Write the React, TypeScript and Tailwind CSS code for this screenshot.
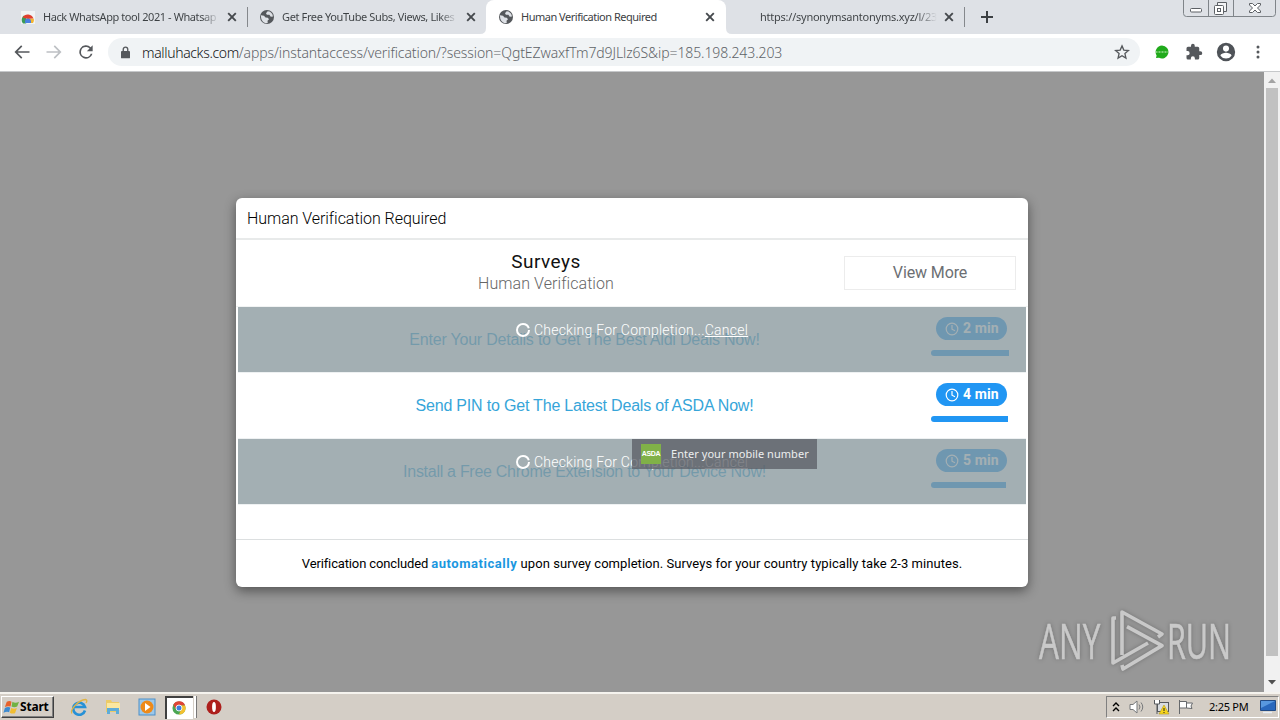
import type { ReactNode } from "react";

function Globe() {
  return (
    <svg viewBox="0 0 24 24" className="h-4 w-4 shrink-0">
      <circle cx="12" cy="12" r="10.5" fill="#55585c" />
      <path d="M3 9.5 7.5 10l2.3 2.6 3.4.4 1.8 2.5-2.2 2.2.3 3.2-3 .6C5.5 20 2.600 16 3 9.500ZM13 3.500l-2.500 2.700 1.300 2.600 3.800-.2 2 2.900 3.400-.3C20.500 6.500 17 3.500 13 3.500Z" fill="#dee1e6" />
    </svg>
  );
}

function Close() {
  return (
    <svg viewBox="0 0 10 10" className="h-[10px] w-[10px] shrink-0">
      <path d="M1.200 1.200 8.800 8.800M8.800 1.200 1.200 8.800" stroke="#45494d" strokeWidth="1.900" />
    </svg>
  );
}

function StoreIcon() {
  return (
    <svg viewBox="0 0 16 16" className="h-4 w-4 shrink-0">
      <path d="M1 2h14v13H1z" fill="#f1f3f4" />
      <path d="M2 13a6 6 0 0 1 2-6.500l4 5.500-2 2.500H3z" fill="#3c9b56" />
      <path d="M2.600 8.500A6 6 0 0 1 13.500 9.500L8 10z" fill="#e0402f" />
      <path d="M8.500 9.800h5.400A6 6 0 0 1 13 14H8z" fill="#f3b632" />
      <path d="M5 12.500a3 3 0 0 1 6 0V14H5z" fill="#4b7fe0" />
    </svg>
  );
}

function TabStrip() {
  return (
    <div className="flex h-[34px] bg-[#dee1e6] text-[11px] text-[#3c4043]">
      <div className="flex w-[247px] items-center pl-5">
        <StoreIcon />
        <div className="ml-[7px] w-[176px] overflow-hidden whitespace-nowrap bg-gradient-to-r from-[#3c4043] from-90% to-[#dee1e6] bg-clip-text tracking-[-0.420px] text-transparent">
          Hack WhatsApp tool 2021 - Whatsap
        </div>
        <div className="ml-2"><Close /></div>
      </div>
      <div className="my-[7px] w-px bg-[#85888c]" />
      <div className="flex w-[238px] items-center pl-[11px]">
        <Globe />
        <div className="ml-[7px] w-[175px] overflow-hidden whitespace-nowrap bg-gradient-to-r from-[#3c4043] from-90% to-[#dee1e6] bg-clip-text tracking-[-0.370px] text-transparent">
          Get Free YouTube Subs, Views, Likes
        </div>
        <div className="ml-[9px]"><Close /></div>
      </div>
      <div className="relative flex w-[240px] items-center rounded-t-lg bg-white pl-3">
        <Globe />
        <div className="ml-[7px] w-[174px] whitespace-nowrap tracking-[-0.490px]">Human Verification Required</div>
        <div className="ml-[10px]"><Close /></div>
        <svg viewBox="0 0 6 6" className="absolute -left-[6px] bottom-0 h-[6px] w-[6px]"><path d="M6 0v6H0q6 0 6-6" fill="#fff" /></svg>
        <svg viewBox="0 0 6 6" className="absolute -right-[6px] bottom-0 h-[6px] w-[6px]"><path d="M0 0v6h6Q0 6 0 0" fill="#fff" /></svg>
      </div>
      <div className="flex w-[238px] items-center pl-[34px]">
        <div className="w-[177px] overflow-hidden whitespace-nowrap bg-gradient-to-r from-[#3c4043] from-88% to-[#dee1e6] bg-clip-text tracking-[-0.240px] text-transparent">
          https://synonymsantonyms.xyz/l/23
        </div>
        <div className="ml-[7px]"><Close /></div>
      </div>
      <div className="my-[7px] w-px bg-[#85888c]" />
      <div className="flex flex-1 items-center pl-4">
        <svg viewBox="0 0 12 12" className="h-3 w-3">
          <path d="M6 0v12M0 6h12" stroke="#3c4043" strokeWidth="2" />
        </svg>
      </div>
      <svg viewBox="0 0 94 17" className="mr-[3px] h-[17px] w-[94px]" fill="none" stroke="#7f8489">
        <path d="M.5 0v13.500a3 3 0 0 0 3 3h86a3 3 0 0 0 3-3V0M25.500 0v16M50.500 0v16" />
        <g stroke="#5c6065">
          <rect x="7.500" y="8.500" width="11" height="3.500" rx="1" fill="#fff" />
          <path d="M34.500 5.500V2.500h9v9h-3" fill="#f3f4f6" />
          <rect x="31.500" y="5.500" width="9" height="9" rx="1" fill="#fff" />
          <rect x="34.500" y="8.500" width="3" height="3" />
          <path d="M66.500 3.500h3l2.500 2.500 2.500-2.500h3v1.500l-3 3 3 3v1.500h-3L72 10l-2.500 2.500h-3V11l3-3-3-3z" fill="#fff" />
        </g>
      </svg>
    </div>
  );
}

function Toolbar() {
  return (
    <div className="flex h-[38px] items-center border-b border-[#c6c8ca] bg-white pb-px">
      <svg viewBox="0 0 24 24" className="ml-3 h-5 w-5" fill="#55585c">
        <path d="M21 11H6.800l5.600-5.600L11 4l-8 8 8 8 1.400-1.400L6.800 13H21z" />
      </svg>
      <svg viewBox="0 0 24 24" className="ml-3 h-5 w-5" fill="#bdc0c4">
        <path d="M3 11h14.200l-5.600-5.600L13 4l8 8-8 8-1.400-1.400 5.600-5.600H3z" />
      </svg>
      <svg viewBox="0 0 24 24" className="ml-3 h-5 w-5" fill="#55585c">
        <path d="M17.650 6.350A8 8 0 1 0 19.730 14h-2.080A6 6 0 1 1 12 6c1.660 0 3.140.69 4.220 1.780L13 11h7V4z" />
      </svg>
      <div className="ml-3 flex h-7 w-[1032px] items-center rounded-full bg-[#f0f3f5]">
        <svg viewBox="0 0 10 14" className="ml-[13px] h-[13px] w-[9px]">
          <path d="M2.500 6V3.500a2.500 2.500 0 0 1 5 0V6" fill="none" stroke="#55585c" strokeWidth="1.500" />
          <rect y="5.300" width="10" height="8.200" rx="1" fill="#55585c" />
        </svg>
        <div className="ml-3 w-[700px] whitespace-nowrap text-[14px] font-light tracking-[-0.090px] text-[#5f6368]">
          <span className="tracking-[-0.350px] text-[#101214]">malluhacks.com</span>/apps/instantaccess/verification/?session=QgtEZwaxfTm7d9JLlz6S&amp;ip=185.198.243.203
        </div>
        <svg viewBox="0 0 24 24" className="ml-auto mr-[10px] h-4 w-4" fill="none" stroke="#55585c" strokeWidth="2">
          <path d="m12 2.800 2.700 6.400 6.900.6-5.200 4.500 1.500 6.800-5.900-3.600-5.900 3.600 1.500-6.800-5.200-4.500 6.900-.6z" />
        </svg>
      </div>
      <svg viewBox="0 0 14 14" className="ml-[15px] h-[14px] w-[14px]">
        <path d="M7 .5a6.500 6.500 0 1 1-3 12.300L1 13l.6-2.600A6.500 6.500 0 0 1 7 .5z" fill="#20aa1b" />
        <path d="M1 7h12" stroke="#98dc91" strokeWidth="1.500" strokeDasharray="1 .5" />
      </svg>
      <svg viewBox="0 0 24 24" className="ml-4 h-[18px] w-[18px]" fill="#55585c">
        <path d="M20.500 11H19V7a2 2 0 0 0-2-2h-4V3.500a2.500 2.500 0 0 0-5 0V5H4a2 2 0 0 0-2 2v3.800h1.500a2.700 2.700 0 0 1 0 5.400H2V20a2 2 0 0 0 2 2h3.800v-1.500a2.700 2.700 0 0 1 5.400 0V22H17a2 2 0 0 0 2-2v-4h1.500a2.500 2.500 0 0 0 0-5z" />
      </svg>
      <svg viewBox="0 0 24 24" className="ml-[12px] h-[22px] w-[22px]" fill="#4f5358">
        <path fillRule="evenodd" d="M12 2a10 10 0 1 0 0 20 10 10 0 0 0 0-20zm0 3a3.300 3.300 0 1 1 0 6.600A3.300 3.300 0 0 1 12 5zm0 14.200a7.200 7.200 0 0 1-6-3.200c0-2 4-3.100 6-3.100s6 1.100 6 3.100a7.200 7.200 0 0 1-6 3.200z" />
      </svg>
      <svg viewBox="0 0 4 14" className="ml-[19px] h-[14px] w-[4px]" fill="#55585c">
        <circle cx="2" cy="2" r="1.500" /><circle cx="2" cy="7" r="1.500" /><circle cx="2" cy="12" r="1.500" />
      </svg>
    </div>
  );
}

type SurveyProps = { title: ReactNode; mins: number; bar: string; tracking: string; pending?: boolean };

function Survey({ title, mins, bar, tracking, pending }: SurveyProps) {
  return (
    <div className="relative mx-[2px] flex h-[66px] border-b border-[#eef1f2] font-['Liberation_Sans',sans-serif]">
      <div className={`flex w-[693px] items-center justify-center whitespace-nowrap text-[16px] text-[#36a5d9] ${tracking}`}>
        {title}
      </div>
      <div className="flex flex-col pt-[10px] font-[Roboto,sans-serif]">
        <div className="ml-[5px] flex h-[23px] w-[71px] items-center rounded-full bg-[#2196f3] pl-[9px] text-[14px] font-bold text-white">
          <svg viewBox="0 0 14 14" className="mr-1 h-[14px] w-[14px]" fill="none" stroke="#fff" strokeWidth="1.200">
            <circle cx="7" cy="7" r="5.800" /><path d="M7 3v4.200l3 1.500" />
          </svg>
          <span className="tracking-[0.100px]">{mins} min</span>
        </div>
        <div className={`mt-[10px] h-[6px] rounded-l-full rounded-r-[2px] bg-[#2196f3] ${bar}`} />
      </div>
      {pending && (
        <div className="absolute inset-x-0 top-0 flex h-[65px] justify-center bg-[#87979c]/77 pt-[13px] font-[Roboto,sans-serif] text-[14px] font-light leading-5 tracking-[0.240px] text-white">
          <svg viewBox="0 0 14 14" className="mr-1 mt-[3px] h-[14px] w-[14px]" fill="none">
            <circle cx="7" cy="7" r="6" stroke="#fff" strokeWidth="2" strokeDasharray="35 3" />
          </svg>
          Checking For Completion...<span className="underline">Cancel</span>
        </div>
      )}
    </div>
  );
}

function Dialog() {
  return (
    <div className="ml-[236px] mt-[126px] flex h-[389px] w-[792px] flex-col rounded-[6px] bg-white font-[Roboto,sans-serif] shadow-[0_4px_12px_rgba(0,0,0,0.45)]">
      <div className="flex h-[42px] items-center border-b-2 border-[#e8eaea] pl-[11px] pt-px text-[16px] font-light tracking-[-0.050px] text-black">
        Human Verification Required
      </div>
      <div className="flex h-[67px] border-b border-[#f1f3f3]">
        <div className="w-[608px] pl-3 pt-[11px] text-center">
          <div className="text-[19px] leading-[22px] tracking-[0.450px] text-[#111]">Surveys</div>
          <div className="text-[16px] font-light leading-[22px] tracking-[0.070px] text-[#666]">Human Verification</div>
        </div>
        <div className="mt-[16px] flex h-[34px] w-[172px] items-center justify-center border border-[#ececec] text-[16px] tracking-[-0.120px] text-[#6c6f73]">
          View More
        </div>
      </div>
      <Survey title="Enter Your Details to Get The Best Aldi Deals Now!" mins={2} bar="w-[78px]" tracking="tracking-[-0.210px]" pending />
      <Survey title="Send PIN to Get The Latest Deals of ASDA Now!" mins={4} bar="w-[77px]" tracking="tracking-[-0.190px]" />
      <div className="relative">
        <Survey title="Install a Free Chrome Extension to Your Device Now!" mins={5} bar="w-[75px]" tracking="tracking-[-0.280px]" pending />
        <div className="absolute left-[396px] top-0 flex h-[30px] w-[185px] items-center bg-[#5a5c64]/75 font-['Noto_Sans',sans-serif] text-[11px] text-[#eceeef]">
          <div className="ml-[9px] flex h-[20px] w-[20px] items-center justify-center bg-[#80b148] font-['Liberation_Sans',sans-serif] text-[7px] font-bold tracking-tighter text-white">
            ASDA
          </div>
          <span className="ml-[10px] whitespace-nowrap tracking-[0.040px]">Enter your mobile number</span>
        </div>
      </div>
      <div className="h-[35px] border-b border-[#dcdfe0]" />
      <div className="flex flex-1 items-center justify-center whitespace-pre text-[13px] tracking-[0.050px] text-black">
        <span className="tracking-[-0.140px]">Verification concluded </span><b className="tracking-[0.550px] text-[#1b97e0]">automatically</b> upon survey completion. Surveys for your country typically take 2-3 minutes.
      </div>
    </div>
  );
}

function Watermark() {
  return (
    <div className="absolute left-[1039px] top-[608px] flex h-[64px] w-[196px] items-center font-['Open_Sans',sans-serif] text-[50px] leading-none text-[#c9c9c9] drop-shadow-[0_0_2px_rgba(0,0,0,0.25)]">
      <div className="w-[71px] [-webkit-text-stroke:0.6px_#c9c9c9]"><span className="inline-block origin-left scale-x-[0.63]">ANY</span></div>
      <svg viewBox="0 0 56 62" className="h-[62px] w-[56px] shrink-0" fill="none" stroke="#c9c9c9" strokeWidth="3.600" strokeLinejoin="round">
        <path d="M6 9H3v45l35-20M12 46V3l40 22-4 3M17 17.600l35 19L13 60l-1-4" />
      </svg>
      <div className="ml-px w-[66px] [-webkit-text-stroke:0.6px_#c9c9c9]"><span className="inline-block origin-left scale-x-[0.61]">RUN</span></div>
    </div>
  );
}

function Scrollbar() {
  return (
    <div className="flex w-4 flex-col items-center bg-[#f1f1f1]">
      <svg viewBox="0 0 16 16" className="h-4 w-4"><path d="m4 11 4-4.500 4 4.500z" fill="#a3a3a3" /></svg>
      <div className="h-[568px] w-[12px] bg-[#c1c1c1]" />
      <svg viewBox="0 0 16 16" className="mt-auto h-[18px] w-4"><path d="m4 5 4 4.500L12 5z" fill="#505050" /></svg>
    </div>
  );
}

function Taskbar() {
  return (
    <div className="flex h-[28px] items-center border-t-2 border-[#f5f3ee] bg-[#d4cec6] font-['Noto_Sans',sans-serif]">
      <div className="ml-px flex h-[22px] w-[53px] items-center border border-b-[#404040] border-l-white border-r-[#404040] border-t-white text-[12px] font-bold text-black shadow-[inset_-1px_-1px_#808080]">
        <svg viewBox="0 0 18 18" className="ml-px h-[17px] w-[17px]">
          <path d="M4 3q3-2 5 0L8 8Q5 7 2 8.500z" fill="#e8622b" />
          <path d="M10 3q3 2 7 0l-2 5q-3 1.500-6 0z" fill="#70b244" />
          <path d="M2 9.500Q5 8 7.700 9L6.500 14Q4 13 .5 14.500z" fill="#3d8ad0" />
          <path d="M8.700 9.500q3 1.500 6 0l-2 5.500q-3 1-5.500-.5z" fill="#f1bd31" />
        </svg>
        <span className="tracking-[-0.200px]">Start</span>
      </div>
      <svg viewBox="0 0 18 18" className="ml-[16px] h-[18px] w-[18px]" fill="none">
        <path d="M15 12.500A6 6 0 1 1 15 9H4.500" stroke="#2791d6" strokeWidth="2.600" />
        <path d="M2 15.500C-1 13 8 2 15.500 1.500c2 .3 1.500 2 .5 3.500" stroke="#e0b343" strokeWidth="1.300" />
      </svg>
      <svg viewBox="0 0 18 18" className="ml-[16px] h-[18px] w-[18px]">
        <path d="M2 2h5l1 2h7v10H2z" fill="#eccb67" /><path d="M3 5h13v7H3z" fill="#fae7a0" />
        <path d="M3 16v-6h12v6h-3v-3H6v3z" fill="#5eacd8" />
      </svg>
      <svg viewBox="0 0 18 18" className="ml-[16px] h-[18px] w-[18px]">
        <rect x="1" y="1" width="16" height="16" fill="#9cc8ea" stroke="#4d8fc8" />
        <circle cx="9" cy="9" r="6.500" fill="#ee8a19" /><path d="m7 5 5.500 4L7 13z" fill="#fff" />
      </svg>
      <div className="ml-[9px] flex h-[23px] w-[28px] items-center justify-center border-l-2 border-t-2 border-[#404040] bg-white pr-[2px]">
        <svg viewBox="0 0 16 16" className="h-[14px] w-[14px]">
          <circle cx="8" cy="8" r="7.500" fill="#4ba653" />
          <path d="M1.500 4.300A7.500 7.500 0 0 1 15 5H8L5 10z" fill="#df4437" />
          <path d="M15 5a7.500 7.500 0 0 1-7 10.500L11 8 9 5z" fill="#f5c12f" />
          <circle cx="8" cy="8" r="3.400" fill="#3f7ee0" stroke="#fff" />
        </svg>
      </div>
      <div className="ml-px h-[22px] w-[3px] border-r border-[#777] bg-white" />
      <svg viewBox="0 0 16 16" className="ml-[9px] h-4 w-4">
        <circle cx="8" cy="8" r="7.500" fill="#ad1f1c" /><ellipse cx="8" cy="8" rx="1.900" ry="5" fill="#fff" />
      </svg>
      <div className="ml-auto mr-px flex h-[22px] w-[173px] items-center border border-b-white border-l-[#808080] border-r-white border-t-[#808080] pl-[5px]">
        <svg viewBox="0 0 8 10" className="h-[10px] w-2" fill="none" stroke="#000" strokeWidth="1.400">
          <path d="m1 4 3-3 3 3M1 9l3-3 3 3" />
        </svg>
        <svg viewBox="0 0 16 16" className="ml-[9px] h-4 w-4" fill="none" stroke="#77797b">
          <path d="M1 5.500h3L8 2v12l-4-3.500H1z" fill="#fff" /><path d="M10 5.500q2 2.500 0 5M12 3.500q3.500 4.500 0 9" />
        </svg>
        <svg viewBox="0 0 17 16" className="ml-[8px] h-4 w-[17px]">
          <rect x="4.500" y="3.500" width="11" height="9" fill="#d9dce0" stroke="#55585c" />
          <path d="M1.500 1v4h5V1M4 5v10" fill="#fff" stroke="#55585c" />
          <path d="m11 6 5 9H6z" fill="#f7d51b" stroke="#b79b18" strokeWidth=".6" /><path d="M11 9v3M11 13v1" stroke="#222" />
        </svg>
        <svg viewBox="0 0 16 16" className="ml-[8px] h-4 w-4" fill="#fff" stroke="#66696c">
          <path d="M1.500 1v14M2 2.500h6.500V9H2M8.500 4h6l-1.500 3 1 2.500-5.500-.5" />
        </svg>
        <span className="ml-[15px] w-[40px] whitespace-nowrap text-[11px] tracking-[-0.280px] text-black">2:25 PM</span>
        <svg viewBox="0 0 16 14" className="ml-[11px] h-[14px] w-4">
          <path d="M.5.5h15v10H.5z" fill="#2968bd" stroke="#224b85" /><path d="M1 1h14L1 8z" fill="#5898df" /><path d="M3 12.500h9" stroke="#e7edf4" strokeWidth="1.500" />
        </svg>
      </div>
    </div>
  );
}

export default function App() {
  return (
    <div className="relative flex h-[720px] w-[1280px] flex-col overflow-hidden bg-[#979797] font-['Noto_Sans',sans-serif]">
      <TabStrip />
      <Toolbar />
      <div className="flex h-[620px]">
        <div className="flex-1"><Dialog /></div>
        <Scrollbar />
      </div>
      <Taskbar />
      <Watermark />
    </div>
  );
}
